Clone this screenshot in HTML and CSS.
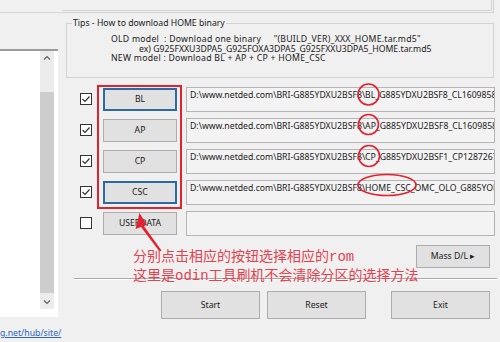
FILE: index.html
```html
<!DOCTYPE html>
<html lang="en">
<head>
  <meta charset="UTF-8" />
  <title>Odin</title>
  <link rel="stylesheet" href="styles.css">
</head>
<body>
  <div class="window">
    <aside class="side">
      <div class="side-top"></div>
      <div class="listbox">
        <div class="list"></div>
        <div class="vscroll">
          <svg class="arrow" width="14" height="14" viewBox="0 0 14 14"><polyline points="4,8.5 7,5.5 10,8.5" fill="none" stroke="#606060" stroke-width="1.2"/></svg>
          <div class="track-top"></div>
          <div class="thumb"></div>
          <svg class="arrow" width="14" height="14" viewBox="0 0 14 14"><polyline points="4,5.5 7,8.5 10,5.5" fill="none" stroke="#606060" stroke-width="1.2"/></svg>
        </div>
      </div>
      <a class="link" href="#">g.net/hub/site/</a>
    </aside>

    <main class="main">
      <div class="top-box"></div>

      <fieldset class="tips">
        <legend>Tips - How to download HOME binary</legend>
        <p class="tip tip-wide">OLD model&nbsp; : Download one binary &nbsp;&nbsp;&nbsp; "(BUILD_VER)_XXX_HOME.tar.md5"</p>
        <p class="tip tip-ex">ex) G925FXXU3DPA5_G925FOXA3DPA5_G925FXXU3DPA5_HOME.tar.md5</p>
        <p class="tip tip-wide">NEW model : Download BL + AP + CP + HOME_CSC</p>
      </fieldset>

      <div class="files">
        <div class="file-row">
          <span class="check"><svg width="10" height="10" viewBox="0 0 10 10"><polyline points="1.5,5 4,7.5 8.5,2.5" fill="none" stroke="#333" stroke-width="1.2"/></svg></span>
          <button class="btn btn-file default">BL</button>
          <div class="path">D:\www.netded.com\BRI-G885YDXU2BSF8\BL_G885YDXU2BSF8_CL16098585_QB12345678_REV00_user_low_ship.tar.md5</div>
        </div>
        <div class="file-row">
          <span class="check"><svg width="10" height="10" viewBox="0 0 10 10"><polyline points="1.5,5 4,7.5 8.5,2.5" fill="none" stroke="#333" stroke-width="1.2"/></svg></span>
          <button class="btn btn-file">AP</button>
          <div class="path">D:\www.netded.com\BRI-G885YDXU2BSF8\AP_G885YDXU2BSF8_CL16098585_QB12345678_REV00_user_low_ship.tar.md5</div>
        </div>
        <div class="file-row">
          <span class="check"><svg width="10" height="10" viewBox="0 0 10 10"><polyline points="1.5,5 4,7.5 8.5,2.5" fill="none" stroke="#333" stroke-width="1.2"/></svg></span>
          <button class="btn btn-file">CP</button>
          <div class="path">D:\www.netded.com\BRI-G885YDXU2BSF8\CP_G885YDXU2BSF1_CP12872670_CL16098585_REV00_user_low_ship.tar.md5</div>
        </div>
        <div class="file-row">
          <span class="check"><svg width="10" height="10" viewBox="0 0 10 10"><polyline points="1.5,5 4,7.5 8.5,2.5" fill="none" stroke="#333" stroke-width="1.2"/></svg></span>
          <button class="btn btn-file default">CSC</button>
          <div class="path">D:\www.netded.com\BRI-G885YDXU2BSF8\HOME_CSC_OMC_OLO_G885YOLO2BSF8_CL16098585_REV00_user_low_ship.tar.md5</div>
        </div>
        <div class="file-row">
          <span class="check"></span>
          <button class="btn btn-file">USERDATA</button>
          <div class="path"></div>
        </div>
      </div>

      <div class="mass-row">
        <button class="btn btn-mass">Mass D/L ▸</button>
      </div>

      <hr class="sep">

      <div class="actions">
        <button class="btn btn-action btn-start">Start</button>
        <button class="btn btn-action btn-reset">Reset</button>
        <button class="btn btn-action btn-exit">Exit</button>
      </div>
    </main>
  </div>

  <svg class="marks" width="500" height="342" viewBox="0 0 500 342">
    <rect x="98" y="86" width="83" height="122" fill="none" stroke="#e3222f" stroke-width="2"/>
    <circle cx="368.5" cy="94.5" r="10.5" fill="none" stroke="#e3222f" stroke-width="1.6"/>
    <circle cx="368.5" cy="124.5" r="10" fill="none" stroke="#e3222f" stroke-width="1.6"/>
    <circle cx="369" cy="156" r="10.5" fill="none" stroke="#e3222f" stroke-width="1.6"/>
    <ellipse cx="387" cy="185" rx="29" ry="10.5" fill="none" stroke="#e3222f" stroke-width="1.6"/>
    <polygon points="139.5,213 147,225 143.5,225.5 161.5,250.5 159.5,251.5 141,227 135.5,229" fill="#e3222f"/>
  </svg>

  <div class="note">
    <p>分别点击相应的按钮选择相应的rom</p>
    <p>这里是odin工具刷机不会清除分区的选择方法</p>
  </div>
</body>
</html>
```

FILE: styles.css
```css
* {
  margin: 0;
  padding: 0;
  box-sizing: border-box;
}
body {
  width: 500px;
  height: 342px;
  overflow: hidden;
  background: #f0f0f0;
  font-family: 'Noto Sans', 'Open Sans', sans-serif;
  font-size: 8.7px;
  color: #1a1a1a;
  position: relative;
}
.window {
  display: flex;
  height: 342px;
}

/* left pane */
.side {
  width: 62px;
  flex-shrink: 0;
  display: flex;
  flex-direction: column;
}
.side-top {
  height: 13px;
  border-bottom: 1px solid #d6d6d6;
}
.listbox {
  margin-top: 36px;
  width: 58px;
  height: 268px;
  background: #fff;
  border-top: 2px solid #9c9c9c;
  padding: 0 4px 8px 0;
  display: flex;
}
.list {
  flex: 1;
}
.vscroll {
  width: 14px;
  display: flex;
  flex-direction: column;
  background: #ececec;
}
.arrow {
  display: block;
  flex-shrink: 0;
}
.track-top {
  height: 27px;
}
.thumb {
  flex: 1;
  background: #cdcdcd;
  margin-bottom: 2px;
}
.link {
  margin-top: 10px;
  line-height: 12px;
  color: #2f63b8;
  white-space: nowrap;
}

/* right pane */
.main {
  flex: 1;
  min-width: 0;
  display: flex;
  flex-direction: column;
}
.top-box {
  height: 13px;
  margin-right: 6px;
  border-bottom: 3px double #d4d4d4;
  border-right: 3px double #d4d4d4;
}
.tips {
  min-width: 0;
  margin: 4px 6px 0 4px;
  border: 1px solid #d2d2d2;
  padding: 6px 0 13px 0;
}
.tips legend {
  margin-left: 5px;
  padding: 0 1px;
  line-height: 12px;
}
.tip {
  line-height: 9.6px;
  padding-left: 44px;
  white-space: nowrap;
}
.tip-wide {
  letter-spacing: 0.25px;
}
.tip-ex {
  padding-left: 72px;
}

.files {
  margin-top: 9px;
  display: flex;
  flex-direction: column;
  gap: 6px;
}
.file-row {
  height: 25px;
  display: flex;
  align-items: center;
  padding-left: 18px;
}
.check {
  width: 12px;
  height: 12px;
  border: 1px solid #333;
  background: #fff;
  display: flex;
  align-items: center;
  justify-content: center;
}
.btn {
  font-family: inherit;
  font-size: 8.7px;
  color: #1a1a1a;
  background: #e1e1e1;
  border: 1px solid #adadad;
}
.btn-file {
  width: 74px;
  height: 23px;
  margin-left: 11px;
}
.btn-file.default {
  border: 2px solid #2c6aa6;
}
.path {
  flex: 1;
  height: 25px;
  margin: 0 5px 0 9px;
  background: #f3f3f3;
  border: 1px solid #b5b5b5;
  padding: 1px 3px;
  line-height: 12px;
  white-space: nowrap;
  overflow: hidden;
}

.mass-row {
  margin-top: 9px;
  display: flex;
  justify-content: flex-end;
  padding-right: 10px;
}
.btn-mass {
  width: 74px;
  height: 23px;
}
.sep {
  margin: 10px 3px 0 12px;
  border: none;
  border-top: 1px solid #a8a8a8;
  border-bottom: 1px solid #fff;
}
.actions {
  margin-top: 11px;
  display: flex;
}
.btn-action {
  width: 99px;
  height: 28px;
}
.btn-start {
  margin-left: 99px;
}
.btn-reset {
  margin-left: 7px;
}
.btn-exit {
  margin-left: 25px;
}

/* annotation overlay */
.marks {
  position: absolute;
  left: 0;
  top: 0;
  pointer-events: none;
}
.note {
  position: absolute;
  left: 133px;
  top: 248px;
  color: #e2434f;
  font-family: 'Liberation Mono', 'Noto Sans CJK SC', monospace;
  font-size: 14px;
  line-height: 19px;
  white-space: nowrap;
}
```
